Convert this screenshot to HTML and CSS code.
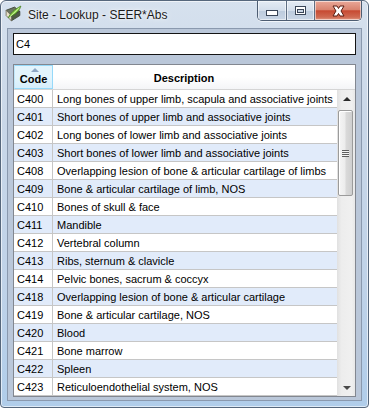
FILE: index.html
```html
<!DOCTYPE html>
<html lang="en">
<head>
  <meta charset="UTF-8" />
  <title>Site - Lookup - SEER*Abs</title>
  <link rel="stylesheet" href="styles.css">
</head>
<body>
  <div class="window">
    <div class="titlebar">
      <svg class="app-icon" width="19" height="19" viewBox="0 0 18 18">
        <path d="M2 5 L10 2 L15 6 L7 10 Z" fill="#6b7560" stroke="#3d4436" stroke-width="0.8"/>
        <path d="M7 10 L15 6 L15 10 L7 15 Z" fill="#4f5a45" stroke="#3d4436" stroke-width="0.8"/>
        <path d="M2 5 L7 10 L7 15 L2 10 Z" fill="#e8e2c8" stroke="#6d6a58" stroke-width="0.8"/>
        <path d="M4 12 C6 8 10 4 16 1 C15 5 11 9 6 11 Z" fill="#8fd14b" stroke="#3f7a1c" stroke-width="0.7"/>
        <path d="M5 12 L14 3" stroke="#d9f5b8" stroke-width="0.7"/>
      </svg>
      <span class="title">Site - Lookup - SEER*Abs</span>
      <div class="caption-btns">
        <div class="cbtn min">
          <svg width="12" height="6" viewBox="0 0 12 6"><rect x="0.5" y="0.5" width="11" height="5" fill="#fff" stroke="#3a4658"/></svg>
        </div>
        <div class="cbtn max">
          <svg width="11" height="9" viewBox="0 0 11 9"><rect x="0.5" y="0.5" width="10" height="8" fill="#fff" stroke="#3a4658"/><rect x="2.5" y="3.5" width="6" height="3" fill="#c9d5e4" stroke="#3a4658"/></svg>
        </div>
        <div class="cbtn close">
          <svg width="15" height="12" viewBox="0 0 15 12"><path d="M2 1 L6 1 L7.5 3.5 L9 1 L13 1 L10 6 L13 11 L9 11 L7.5 8.5 L6 11 L2 11 L5 6 Z" fill="#fff" stroke="#5a1d12" stroke-width="1"/></svg>
        </div>
      </div>
    </div>

    <div class="client">
      <div class="search">C4</div>

      <div class="table">
        <div class="thead">
          <div class="th code sorted"><span class="sort-arrow"></span>Code</div>
          <div class="th desc">Description</div>
        </div>
        <div class="tbody">
          <div class="rows">
            <div class="row"><div class="td code">C400</div><div class="td desc">Long bones of upper limb, scapula and associative joints</div></div>
            <div class="row alt"><div class="td code">C401</div><div class="td desc">Short bones of upper limb and associative joints</div></div>
            <div class="row"><div class="td code">C402</div><div class="td desc">Long bones of lower limb and associative joints</div></div>
            <div class="row alt"><div class="td code">C403</div><div class="td desc">Short bones of lower limb and associative joints</div></div>
            <div class="row"><div class="td code">C408</div><div class="td desc">Overlapping lesion of bone &amp; articular cartilage of limbs</div></div>
            <div class="row alt"><div class="td code">C409</div><div class="td desc">Bone &amp; articular cartilage of limb, NOS</div></div>
            <div class="row"><div class="td code">C410</div><div class="td desc">Bones of skull &amp; face</div></div>
            <div class="row alt"><div class="td code">C411</div><div class="td desc">Mandible</div></div>
            <div class="row"><div class="td code">C412</div><div class="td desc">Vertebral column</div></div>
            <div class="row alt"><div class="td code">C413</div><div class="td desc">Ribs, sternum &amp; clavicle</div></div>
            <div class="row"><div class="td code">C414</div><div class="td desc">Pelvic bones, sacrum &amp; coccyx</div></div>
            <div class="row alt"><div class="td code">C418</div><div class="td desc">Overlapping lesion of bone &amp; articular cartilage</div></div>
            <div class="row"><div class="td code">C419</div><div class="td desc">Bone &amp; articular cartilage, NOS</div></div>
            <div class="row alt"><div class="td code">C420</div><div class="td desc">Blood</div></div>
            <div class="row"><div class="td code">C421</div><div class="td desc">Bone marrow</div></div>
            <div class="row alt"><div class="td code">C422</div><div class="td desc">Spleen</div></div>
            <div class="row"><div class="td code">C423</div><div class="td desc">Reticuloendothelial system, NOS</div></div>
          </div>
          <div class="scrollbar">
            <div class="sb-btn"><span class="arrow-up"></span></div>
            <div class="sb-track">
              <div class="sb-thumb"><span class="grip"></span></div>
            </div>
            <div class="sb-btn"><span class="arrow-down"></span></div>
          </div>
        </div>
      </div>
    </div>
  </div>
</body>
</html>
```

FILE: styles.css
```css
body {
  margin: 0;
  width: 369px;
  height: 408px;
  overflow: hidden;
  background: #ffffff;
  font-family: "Liberation Sans", Arial, sans-serif;
}

.window {
  box-sizing: border-box;
  width: 369px;
  height: 408px;
  border: 1px solid #56677c;
  border-radius: 6px 6px 4px 4px;
  background: linear-gradient(to bottom, #d6e1ee 0%, #c9d7e8 30%, #bfd2e8 70%, #b0cdea 100%);
  box-shadow: inset 0 0 0 1px rgba(255, 255, 255, 0.6);
  padding: 0 6px 6px 6px;
  display: flex;
  flex-direction: column;
}

/* title bar */
.titlebar {
  height: 27px;
  display: flex;
  align-items: flex-start;
}

.app-icon {
  margin: 4px 0 0 -3px;
  flex: none;
}

.title {
  margin: 7px 0 0 5px;
  font-size: 12px;
  color: #1b1b1b;
  text-shadow: 0 0 6px rgba(255, 255, 255, 0.9), 0 0 2px rgba(255, 255, 255, 0.9);
}

.caption-btns {
  margin-left: auto;
  display: flex;
  height: 19px;
  border: 1px solid #4d5d72;
  border-top: none;
  border-radius: 0 0 5px 5px;
  overflow: hidden;
  box-shadow: 0 1px 0 rgba(255, 255, 255, 0.7);
}

.cbtn {
  display: flex;
  align-items: center;
  justify-content: center;
  box-shadow: inset 0 0 0 1px rgba(255, 255, 255, 0.55);
}

.cbtn.min {
  width: 28px;
  background: linear-gradient(to bottom, #e4ebf4 0%, #d3deeb 50%, #bccbdd 51%, #c9d6e6 100%);
  border-right: 1px solid #5e6e83;
}

.cbtn.min svg {
  margin-top: 5px;
}

.cbtn.max {
  width: 27px;
  background: linear-gradient(to bottom, #e4ebf4 0%, #d3deeb 50%, #bccbdd 51%, #c9d6e6 100%);
  border-right: 1px solid #5e6e83;
}

.cbtn.close {
  width: 46px;
  background: linear-gradient(to bottom, #e9a899 0%, #d98470 45%, #c74a32 52%, #cf6a52 85%, #e29a85 100%);
}

/* client area */
.client {
  flex: 1;
  border: 1px solid #8a99ae;
  background: #bac7d9;
  padding: 4px 5px 3px 5px;
  display: flex;
  flex-direction: column;
}

.search {
  height: 20px;
  border: 1px solid #141414;
  background: #ffffff;
  font-size: 11px;
  line-height: 20px;
  padding-left: 2px;
  color: #000000;
}

.table {
  margin-top: 9px;
  flex: 1;
  border: 1px solid #828790;
  background: #ffffff;
  display: flex;
  flex-direction: column;
  overflow: hidden;
  font-size: 11px;
  color: #000000;
}

.thead {
  display: flex;
  height: 24px;
  border-bottom: 1px solid #d5d5d5;
  background: linear-gradient(to bottom, #ffffff 0%, #ffffff 50%, #f4f5f7 100%);
}

.th {
  font-weight: bold;
  font-size: 11px;
  line-height: 26px;
  text-align: center;
  box-sizing: border-box;
}

.th.code {
  width: 39px;
  position: relative;
  border-right: 1px solid #d5d5d5;
}

.th.sorted {
  background: linear-gradient(to bottom, #e3f4fc 0%, #e3f4fc 50%, #d6eefb 100%);
  border: 1px solid #96d9f9;
  border-left-color: #c1e7fa;
}

.sort-arrow {
  position: absolute;
  top: 2px;
  left: 16px;
  width: 0;
  height: 0;
  border-left: 4px solid transparent;
  border-right: 4px solid transparent;
  border-bottom: 4px solid #8ea7c4;
}

.th.desc {
  flex: 1;
  padding-right: 40px;
}

.tbody {
  flex: 1;
  display: flex;
  min-height: 0;
}

.rows {
  flex: 1;
}

.row {
  display: flex;
  height: 17px;
  border-bottom: 1px solid #c6c6c6;
  line-height: 18px;
}

.row.alt {
  background: #e1ebfa;
}

.td {
  white-space: nowrap;
  overflow: hidden;
}

.td.code {
  width: 35px;
  padding-left: 3px;
  border-right: 1px solid #c6c6c6;
}

.td.desc {
  flex: 1;
  padding-left: 4px;
}

/* scrollbar */
.scrollbar {
  width: 17px;
  display: flex;
  flex-direction: column;
  background: linear-gradient(to right, #e3e3e3 0%, #ededed 20%, #f0f0f0 80%, #e8e8e8 100%);
  border-left: 1px solid #e2e2e2;
}

.sb-btn {
  height: 17px;
  display: flex;
  align-items: center;
  justify-content: center;
  flex: none;
}

.arrow-up {
  width: 0;
  height: 0;
  border-left: 4px solid transparent;
  border-right: 4px solid transparent;
  border-bottom: 4px solid #2a2a2a;
}

.arrow-down {
  width: 0;
  height: 0;
  border-left: 4px solid transparent;
  border-right: 4px solid transparent;
  border-top: 4px solid #4a4a4a;
}

.sb-track {
  flex: 1;
  padding-top: 3px;
}

.sb-thumb {
  box-sizing: border-box;
  width: 15px;
  height: 86px;
  border: 1px solid #9b9b9b;
  border-radius: 2px;
  background: linear-gradient(to right, #f5f5f5 0%, #ececec 45%, #d9d9d9 55%, #cfcfcf 100%);
  box-shadow: inset 1px 1px 0 #ffffff;
  display: flex;
  align-items: center;
  justify-content: center;
}

.grip {
  width: 7px;
  height: 7px;
  background: repeating-linear-gradient(to bottom, #5f5f5f 0px, #5f5f5f 1px, #f4f4f4 1px, #f4f4f4 2px);
}
```
